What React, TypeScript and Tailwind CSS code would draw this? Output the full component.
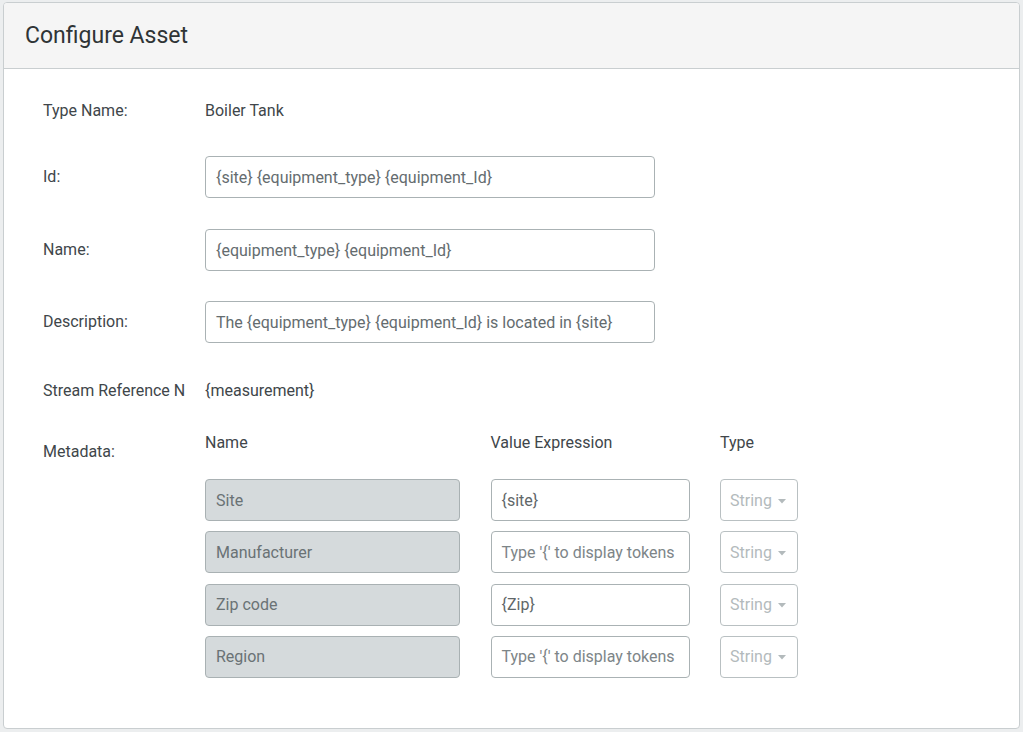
import React from "react";

const rows = [
  { name: "Site", value: "{site}" },
  { name: "Manufacturer", value: "" },
  { name: "Zip code", value: "{Zip}" },
  { name: "Region", value: "" },
];

function Field({ value }: { value: string }) {
  return (
    <div className="flex h-[42px] w-[450px] items-center rounded-[4px] border border-[#aab2b4] bg-white px-[10px] pt-[1px] text-[#646c6f]">
      {value}
    </div>
  );
}

export default function App() {
  return (
    <div
      className="min-h-screen bg-[#eceeef] px-[3px] pt-[2px] pb-[3px]"
      style={{ fontFamily: "Roboto, 'Liberation Sans', sans-serif" }}
    >
      <div className="h-[727px] w-[1017px] overflow-hidden rounded-[4px] border border-[#c9ced0] bg-white">
        {/* Header */}
        <div className="flex h-[66px] items-center border-b border-[#c9ced0] bg-[#f5f5f5] pl-[21px] pt-[2px] text-[23px] text-[#2f3436]">
          Configure Asset
        </div>

        {/* Body */}
        <div className="pl-[39px] pt-[20px] text-[16px] text-[#40464a]">
          <div className="flex h-[42px] items-center pt-[2px]">
            <div className="w-[162px] shrink-0">Type Name:</div>
            <div>Boiler Tank</div>
          </div>

          <div className="mt-[25px] flex items-center">
            <div className="w-[162px] shrink-0">Id:</div>
            <Field value="{site} {equipment_type} {equipment_Id}" />
          </div>

          <div className="mt-[31px] flex items-center">
            <div className="w-[162px] shrink-0">Name:</div>
            <Field value="{equipment_type} {equipment_Id}" />
          </div>

          <div className="mt-[30px] flex items-center">
            <div className="w-[162px] shrink-0">Description:</div>
            <Field value="The {equipment_type} {equipment_Id} is located in {site}" />
          </div>

          {/* label column is too narrow in the original, so only this much shows */}
          <div className="mt-[26px] flex h-[42px] items-center pt-[2px]">
            <div className="w-[162px] shrink-0 whitespace-nowrap">Stream Reference N</div>
            <div>{"{measurement}"}</div>
          </div>

          {/* Metadata */}
          <div className="mt-[22px] flex">
            <div className="w-[162px] shrink-0 pt-[9px] leading-[20px]">Metadata:</div>
            <div>
              <div className="grid grid-cols-[255px_199px_78px] gap-x-[30.5px] leading-[20px]">
                <div>Name</div>
                <div>Value Expression</div>
                <div>Type</div>
              </div>
              <div className="mt-[26px] grid grid-cols-[255px_199px_78px] gap-x-[30.5px] gap-y-[10.33px]">
                {rows.map((r) => (
                  <React.Fragment key={r.name}>
                    <div className="flex h-[42px] items-center rounded-[4px] border border-[#a9b1b3] bg-[#d5dadc] px-[10px] pt-[1px] text-[#6a7275]">
                      {r.name}
                    </div>
                    <div className="flex h-[42px] items-center rounded-[4px] border border-[#aab2b4] bg-white px-[10px] pt-[1px]">
                      {r.value ? (
                        <span className="text-[#5f6769]">{r.value}</span>
                      ) : (
                        <span className="whitespace-nowrap text-[#7d8588]">Type '{"{"}' to display tokens</span>
                      )}
                    </div>
                    <div className="flex h-[42px] items-center gap-[6px] rounded-[4px] border border-[#b9c0c2] bg-white pl-[9px] pt-[1px] text-[#b3babc]">
                      <span>String</span>
                      <svg width="8" height="5" viewBox="0 0 8 5" className="mt-[1px]">
                        <path d="M0 0h8L4 4.5z" fill="#b3babc" />
                      </svg>
                    </div>
                  </React.Fragment>
                ))}
              </div>
            </div>
          </div>
        </div>
      </div>
    </div>
  );
}
